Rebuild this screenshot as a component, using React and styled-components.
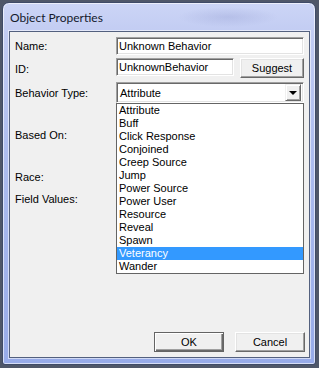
import React from 'react';
import styled, { createGlobalStyle, css } from 'styled-components';

const Global = createGlobalStyle`
  html, body { margin: 0; padding: 0; }
  body {
    background: #4f5769;
    width: 319px;
    height: 368px;
    overflow: hidden;
    font-family: "Liberation Sans", Arial, sans-serif;
  }
`;

const Window = styled.div`
  box-sizing: border-box;
  margin: 2px 0 0 2px;
  width: 314px;
  height: 363px;
  border: 1px solid #3f4b68;
  border-radius: 7px 7px 3px 3px;
  background:
    radial-gradient(ellipse 50px 10px at 225px 14px, rgba(120, 130, 190, 0.22), rgba(120, 130, 190, 0)),
    linear-gradient(180deg, #ccd5f6 0%, #c1cbf2 9%, #aebdee 40%, #97abe9 100%);
  box-shadow: inset 0 0 0 1px rgba(255, 255, 255, 0.6);
  display: flex;
  flex-direction: column;
  padding: 0 5px 6px 6px;
`;

const TitleBar = styled.div`
  height: 28px;
  display: flex;
  align-items: center;
  padding-left: 1px;
  font-family: Lato, "Liberation Sans", sans-serif;
  font-size: 12px;
  color: #141a2c;
`;

const Client = styled.div`
  position: relative;
  flex: 1;
  box-sizing: border-box;
  background: #f0f0f0;
  border: 1px solid #53607e;
  box-shadow: 0 0 0 1px rgba(255, 255, 255, 0.55);
  display: flex;
  flex-direction: column;
  padding: 5px 5px 5px 5px;
`;

const Row = styled.div`
  display: flex;
  align-items: ${(p) => p.$align || 'center'};
  height: ${(p) => p.$h}px;
  margin-top: ${(p) => p.$mt || 0}px;
`;

const Label = styled.div`
  width: 101px;
  flex: none;
  margin-top: ${(p) => p.$mt || 0}px;
  font-size: 11px;
  color: #000;
`;

const Controls = styled.div`
  display: flex;
  gap: 6px;
  width: 188px;
  align-items: flex-start;
`;

const sunken = css`
  box-sizing: border-box;
  background: #fff;
  border: 1px solid;
  border-color: #a0a0a0 #fff #fff #a0a0a0;
  box-shadow: inset 1px 1px 0 #696969, inset -1px -1px 0 #e3e3e3;
`;

const TextBox = styled.input`
  ${sunken};
  width: ${(p) => p.$w}px;
  height: 18px;
  margin: 0;
  padding: 0 0 0 2px;
  font-family: "Liberation Sans", Arial, sans-serif;
  font-size: 11px;
  color: #000;
  outline: none;
`;

const Button = styled.button`
  box-sizing: border-box;
  width: ${(p) => p.$w}px;
  height: ${(p) => p.$h}px;
  margin: 0;
  padding: 0;
  background: #f0f0f0;
  font-family: "Liberation Sans", Arial, sans-serif;
  font-size: 11px;
  color: #000;
  border: 1px solid;
  border-color: #fff #696969 #696969 #fff;
  box-shadow: inset -1px -1px 0 #a0a0a0, inset 1px 1px 0 #e3e3e3;
  ${(p) =>
    p.$default &&
    css`
      border-color: #646464;
      box-shadow: inset 1px 1px 0 #fff, inset -1px -1px 0 #696969, inset -2px -2px 0 #a0a0a0;
    `}
`;

const Combo = styled.div`
  ${sunken};
  width: 188px;
  height: 21px;
  display: flex;
  align-items: center;
  padding: 2px 2px 2px 3px;
  font-size: 11px;
  color: #000;
`;

const ComboText = styled.span`
  flex: 1;
`;

const ArrowButton = styled.div`
  box-sizing: border-box;
  width: 16px;
  height: 17px;
  background: #f0f0f0;
  border: 1px solid;
  border-color: #f0f0f0 #696969 #696969 #f0f0f0;
  box-shadow: inset 1px 1px 0 #fff, inset -1px -1px 0 #a0a0a0;
  display: flex;
  align-items: center;
  justify-content: center;
`;

const Arrow = styled.div`
  width: 0;
  height: 0;
  border-left: 4px solid transparent;
  border-right: 4px solid transparent;
  border-top: 4px solid #000;
  margin-top: 1px;
`;

const DropList = styled.ul`
  position: absolute;
  left: 106px;
  top: 71px;
  box-sizing: border-box;
  width: 188px;
  margin: 0;
  padding: 0;
  list-style: none;
  background: #fff;
  border: 1px solid #646464;
`;

const Item = styled.li`
  height: 13px;
  line-height: 13px;
  padding-left: 2px;
  font-size: 11px;
  color: ${(p) => (p.$selected ? '#fff' : '#000')};
  background: ${(p) => (p.$selected ? '#3399ff' : 'transparent')};
`;

const Footer = styled.div`
  margin-top: auto;
  display: flex;
  justify-content: flex-end;
  gap: 11px;
  margin-right: -1px;
`;

const items = [
  'Attribute',
  'Buff',
  'Click Response',
  'Conjoined',
  'Creep Source',
  'Jump',
  'Power Source',
  'Power User',
  'Resource',
  'Reveal',
  'Spawn',
  'Veterancy',
  'Wander',
];

export default function App() {
  return (
    <>
      <Global />
      <Window>
        <TitleBar>Object Properties</TitleBar>
        <Client>
          <Row $h={18}>
            <Label>Name:</Label>
            <Controls>
              <TextBox $w={188} readOnly value="Unknown Behavior" />
            </Controls>
          </Row>
          <Row $h={20} $mt={3} $align="flex-start">
            <Label $mt={5}>ID:</Label>
            <Controls>
              <TextBox $w={118} readOnly value="UnknownBehavior" />
              <Button $w={64} $h={20}>Suggest</Button>
            </Controls>
          </Row>
          <Row $h={21} $mt={4}>
            <Label>Behavior Type:</Label>
            <Combo>
              <ComboText>Attribute</ComboText>
              <ArrowButton>
                <Arrow />
              </ArrowButton>
            </Combo>
          </Row>
          <Row $h={14} $mt={25}>
            <Label>Based On:</Label>
          </Row>
          <Row $h={14} $mt={28}>
            <Label>Race:</Label>
          </Row>
          <Row $h={14} $mt={8}>
            <Label>Field Values:</Label>
          </Row>
          <Footer>
            <Button $default $w={70} $h={20}>OK</Button>
            <Button $w={70} $h={20}>Cancel</Button>
          </Footer>
          <DropList>
            {items.map((it) => (
              <Item key={it} $selected={it === 'Veterancy'}>
                {it}
              </Item>
            ))}
          </DropList>
        </Client>
      </Window>
    </>
  );
}
